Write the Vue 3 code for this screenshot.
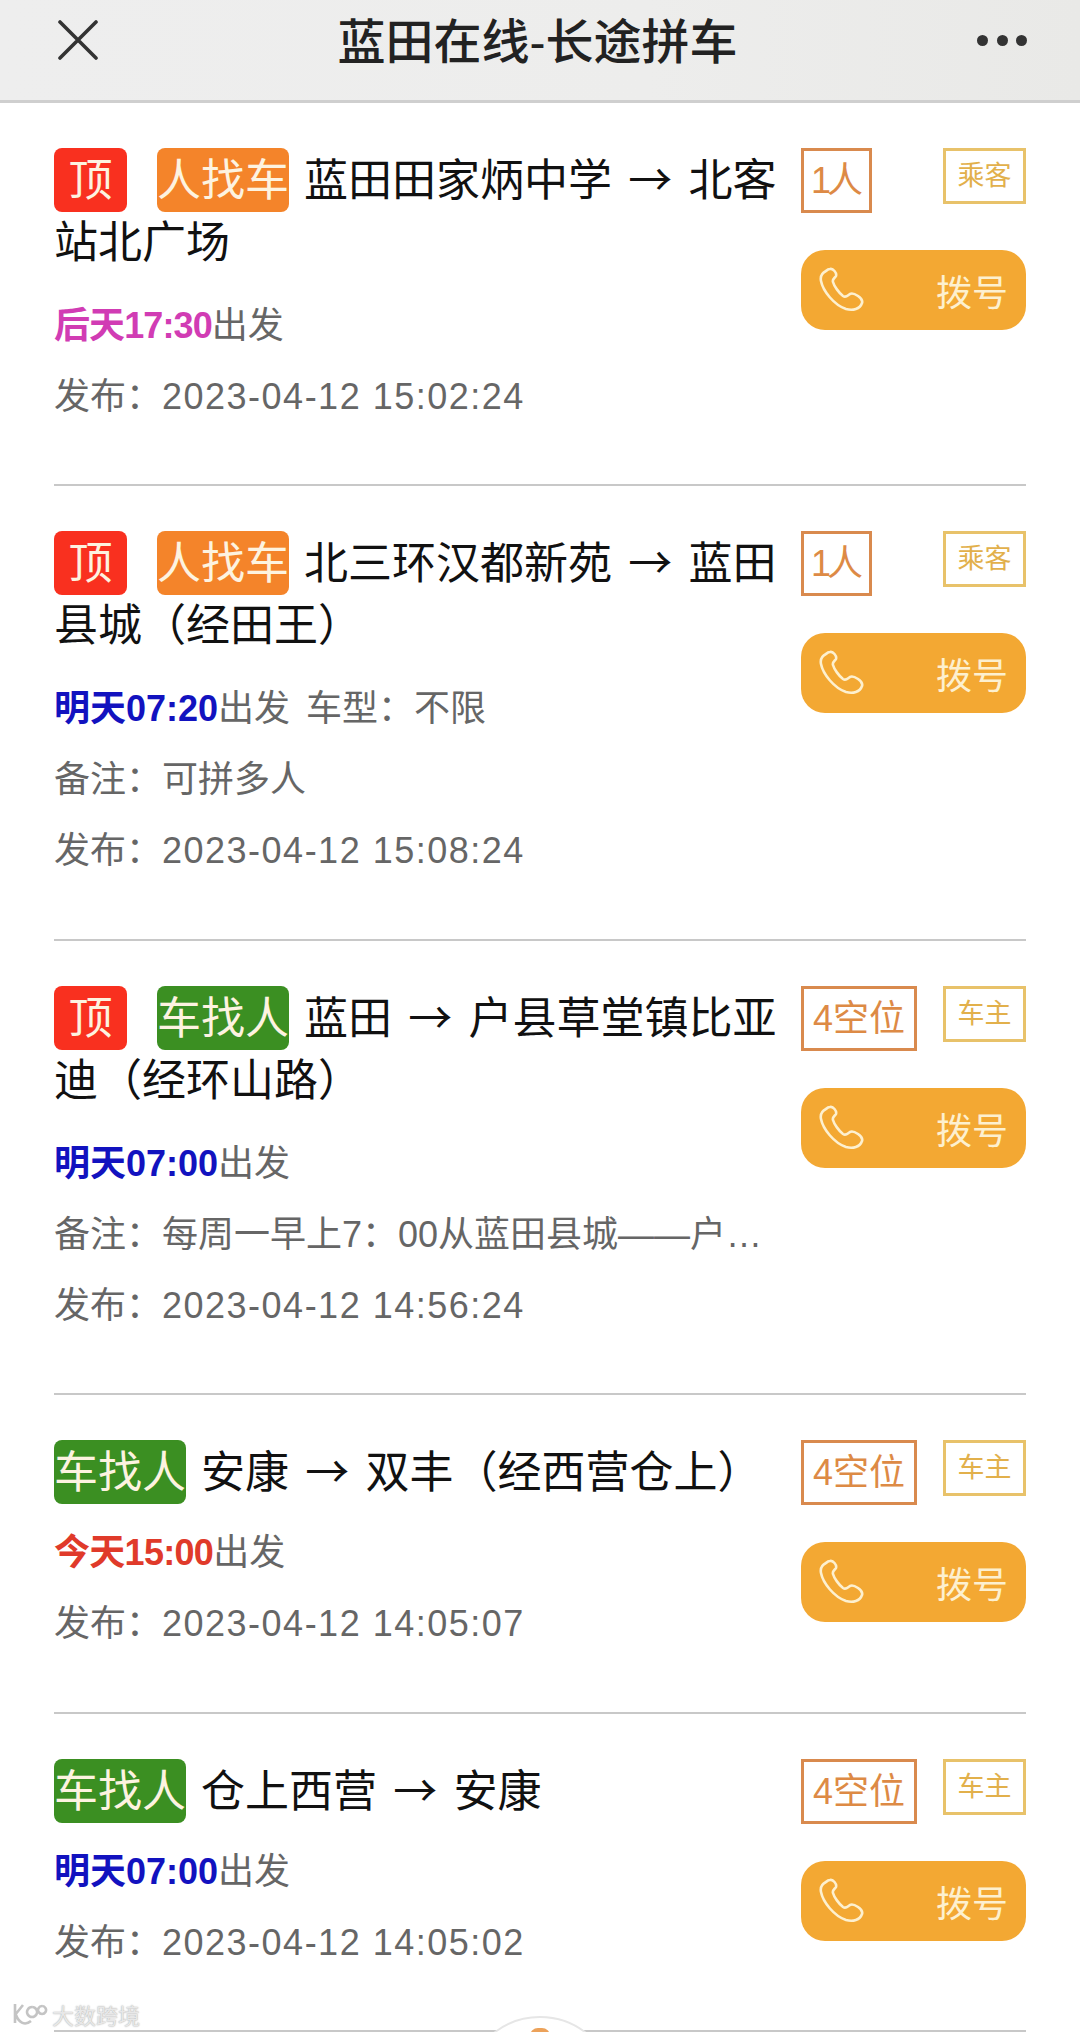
<script setup>
const rows = [
  { top: true, two: true, kind: '人找车', cls: 'orange', from: '蓝田田家炳中学', to: '北客站北广场', time: '后天17:30', tc: 'pink', extra: '', note: '', pub: '2023-04-12 15:02:24', seat: '1人', role: '乘客', narrow: true },
  { top: true, two: true, kind: '人找车', cls: 'orange', from: '北三环汉都新苑', to: '蓝田县城（经田王）', time: '明天07:20', tc: 'blue', extra: '车型：不限', note: '可拼多人', pub: '2023-04-12 15:08:24', seat: '1人', role: '乘客', narrow: true },
  { top: true, two: true, kind: '车找人', cls: 'green', from: '蓝田', to: '户县草堂镇比亚迪（经环山路）', time: '明天07:00', tc: 'blue', extra: '', note: '每周一早上7：00从蓝田县城——户…', pub: '2023-04-12 14:56:24', seat: '4空位', role: '车主' },
  { top: false, two: false, kind: '车找人', cls: 'green', from: '安康', to: '双丰（经西营仓上）', time: '今天15:00', tc: 'red', extra: '', note: '', pub: '2023-04-12 14:05:07', seat: '4空位', role: '车主' },
  { top: false, two: false, kind: '车找人', cls: 'green', from: '仓上西营', to: '安康', time: '明天07:00', tc: 'blue', extra: '', note: '', pub: '2023-04-12 14:05:02', seat: '4空位', role: '车主' }
]
</script>

<template>
  <div class="page">
    <header class="bar">
      <svg class="close" width="40" height="40" viewBox="0 0 40 40"><path d="M2 2 L38 38 M38 2 L2 38" stroke="#333" stroke-width="3.6" fill="none" stroke-linecap="round"/></svg>
      <h1 class="title">蓝田在线-长途拼车</h1>
      <div class="dots"><i></i><i></i><i></i></div>
    </header>
    <main>
      <article v-for="(r, i) in rows" :key="i" class="row">
        <div class="left">
          <div class="route" :class="{ two: r.two }">
            <span v-if="r.top" class="badge ding">顶</span><span class="badge" :class="r.cls">{{ r.kind }}</span>{{ r.from }} <span class="arrow">→</span> {{ r.to }}
          </div>
          <p class="meta"><b :class="r.tc">{{ r.time }}</b>出发<span v-if="r.extra" class="extra">{{ r.extra }}</span></p>
          <p v-if="r.note" class="meta">备注：{{ r.note }}</p>
          <p class="meta">发布：<span class="stamp">{{ r.pub }}</span></p>
        </div>
        <div class="right">
          <div class="tags">
            <span class="seat" :class="{ narrow: r.narrow }">{{ r.seat }}</span>
            <span class="role">{{ r.role }}</span>
          </div>
          <div class="call">
            <svg width="46" height="46" viewBox="0 0 46 46"><path d="M7 4 C3 6 1 9 2 14 C4 24 15 38 27 42 C34 44 41 42 43 36 C44 33 42 31 39 29 C36 27 33 26 31 27 C28 29 27 31 24 29 C20 26 15 19 14 15 C13 12 16 11 17 9 C18 6 14 1 11 2 C9 2 8 3 7 4 Z" fill="none" stroke="#fdf0cf" stroke-width="2.6"/></svg>
            <span>拨号</span>
          </div>
        </div>
      </article>
    </main>
    <div class="mark">
      <svg width="38" height="24" viewBox="0 0 38 24"><path d="M5 2 V21 M5 13 L13 3 M6 13 C9 21 15 24 21 19 M22 5 a5 5 0 1 0 .1 0 M32 4 a4 4 0 1 0 .1 0" fill="none" stroke="#c4c4c4" stroke-width="2.6"/></svg>
      <span>大数跨境</span>
    </div>
    <div class="fab"><i></i></div>
  </div>
</template>

<style scoped>
.page { position: relative; width: 1080px; height: 2032px; overflow: hidden; background: #fff; font-family: "Liberation Sans", "Noto Sans CJK SC", sans-serif; }
.bar { height: 103px; box-sizing: border-box; border-bottom: 3px solid #cfcfcf; background: linear-gradient(90deg, #eeeeee, #ededec 60%, #e9e9e7); display: flex; align-items: center; justify-content: space-between; padding: 0 53px 20px 58px; }
.title { margin: 0 0 5px; font-size: 48px; font-weight: 500; color: #222; }
.dots { display: flex; gap: 8.5px; }
.dots i { width: 11px; height: 11px; border-radius: 50%; background: #333; }
.row { display: flex; margin: 0 54px; padding: 45px 0 52.4px; border-bottom: 2px solid #c8c8c8; }
.left { width: 726px; margin-right: 21px; }
.route { font-size: 44px; line-height: 62px; color: #111; padding-top: 2px; margin-bottom: 13px; }
.route.two { margin-bottom: 16px; }
.badge { display: inline-block; height: 64px; margin-top: -2px; border-radius: 8px; line-height: 66px; color: #fdf3e0; vertical-align: top; margin-right: 15px; }
.ding { width: 73px; text-align: center; background: #f9301f; margin-right: 30px; }
.orange { background: #f4842a; }
.green { background: #3b8f22; }
.arrow { font-family: "Noto Sans CJK SC", sans-serif; line-height: 1; margin: 0 4px; }
.meta { margin: 0; font-size: 36px; line-height: 71px; color: #666; }
.meta b { font-weight: 700; }
.stamp { letter-spacing: 1.5px; }
.pink { color: #d13cb4; letter-spacing: -0.9px; }
.blue { color: #1212bf; }
.red { color: #e03a2a; letter-spacing: -0.7px; }
.extra { margin-left: 16px; }
.right { width: 225px; }
.tags { display: flex; justify-content: space-between; align-items: flex-start; }
.seat { border: 3px solid #d98a4e; height: 65px; box-sizing: border-box; padding: 0 9px; font-size: 36px; line-height: 59px; color: #dd8a45; }
.narrow { padding: 0 10px 0 7px; letter-spacing: -4px; }
.role { border: 3px solid #e8c26a; width: 83px; height: 56px; box-sizing: border-box; text-align: center; font-size: 27px; line-height: 50px; color: #e2b04b; }
.call { margin-top: 37px; height: 80px; border-radius: 24px; background: #f3a833; display: flex; align-items: center; justify-content: space-between; padding: 0 18px; color: #fdf0cf; font-size: 36px; }
.mark { position: absolute; left: 10px; top: 1998px; display: flex; align-items: center; gap: 4px; color: #e8e8e8; font-size: 22px; text-shadow: 0 0 1.5px #999; }
.fab { position: absolute; left: 465px; top: 2016px; width: 150px; height: 150px; border-radius: 50%; background: #fff; border: 2px solid #e6e6e6; box-sizing: border-box; }
.fab i { display: block; width: 20px; height: 8px; margin: 10px auto 0; background: #eca25a; border-radius: 10px 10px 0 0; }
</style>
